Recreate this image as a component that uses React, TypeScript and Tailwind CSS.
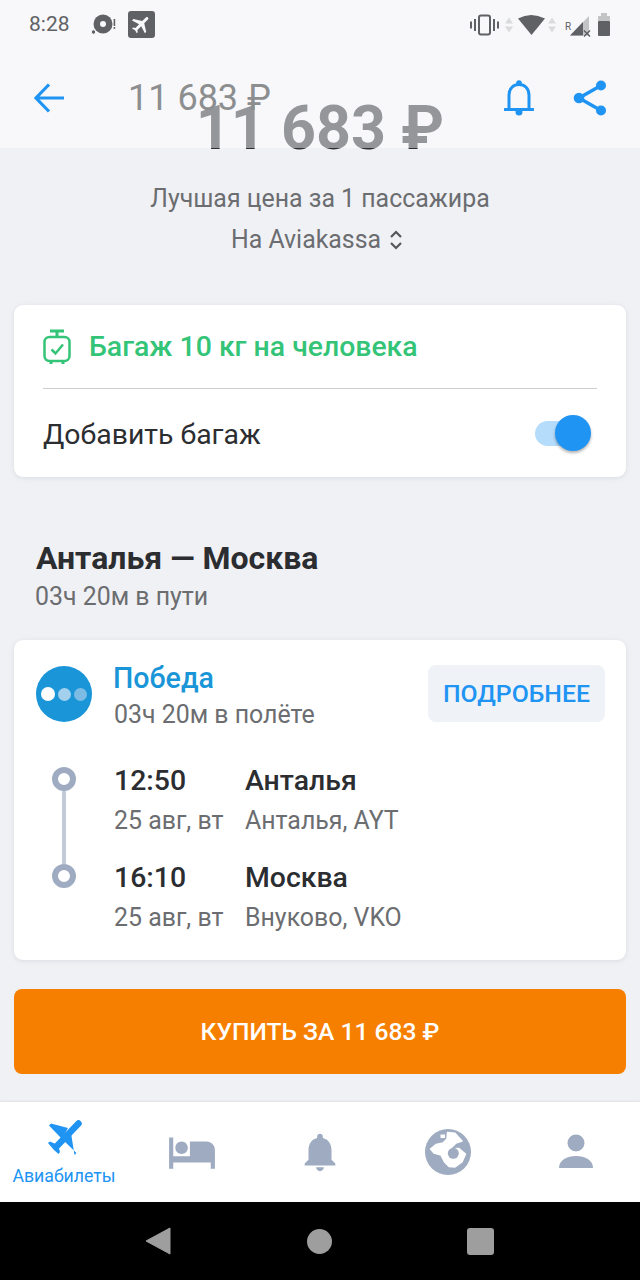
const planePath =
  "M21 16v-2l-8-5V3.5c0-.83-.67-1.5-1.5-1.5S10 2.67 10 3.5V9l-8 5v2l8-2.5V19l-2 1.5V22l3.5-1 3.5 1v-1.5L13 19v-5.5l8 2.5z";

function StatusBar() {
  return (
    <div className="flex h-12 items-center pl-[29px] pr-[29px] pt-[1px] text-[#5f6164]">
      <span className="text-[21px] leading-none">8:28</span>
      {/* disc + alert */}
      <svg width="26" height="22" viewBox="0 0 26 22" className="ml-[20px]">
        <circle cx="13" cy="10" r="9.5" fill="#5f6164" />
        <circle cx="13" cy="10" r="3" fill="#f7f8fa" />
        <circle cx="3.5" cy="18" r="2.2" fill="#5f6164" stroke="#f7f8fa" strokeWidth="1" />
        <rect x="23.6" y="5" width="1.6" height="7" fill="#5f6164" />
        <rect x="23.6" y="13" width="1.6" height="1.8" fill="#5f6164" />
      </svg>
      <div className="ml-[12px] flex h-[27px] w-[27px] items-center justify-center rounded-[3px] bg-[#5f6164]">
        <svg width="23" height="23" viewBox="0 0 24 24" className="rotate-45">
          <path d={planePath} fill="#f7f8fa" />
        </svg>
      </div>
      <div className="ml-auto flex items-center">
        {/* vibrate */}
        <svg width="29" height="22" viewBox="0 0 29 22" fill="#5f6164">
          <rect x="0" y="7.5" width="2" height="7" />
          <rect x="4" y="5" width="2" height="12" />
          <rect x="23" y="5" width="2" height="12" />
          <rect x="27" y="7.5" width="2" height="7" />
          <rect x="9" y="1.5" width="11" height="19" rx="2" fill="none" stroke="#5f6164" strokeWidth="2" />
        </svg>
        {/* wifi with arrows */}
        <svg width="51" height="24" viewBox="0 0 51 24" className="ml-[6px]">
          <path d="M4 3 L8 9 H0 Z M0 12 H8 L4 18 Z" fill="#dadbdd" transform="translate(0 1.5)" />
          <path d="M13 5.5 Q26 -1.500 40 5.500 L26.500 22 Z" fill="#5f6164" />
          <path d="M4 3 L8 9 H0 Z M0 12 H8 L4 18 Z" fill="#dadbdd" transform="translate(43 1.5)" />
        </svg>
        {/* signal */}
        <svg width="28" height="24" viewBox="0 0 28 24" className="ml-[9px]">
          <path d="M5 22.500 L24 3 V22.500 Z" fill="#c3c4c6" />
          <path d="M5 22.500 L18 9 V22.500 Z" fill="#5f6164" />
          <text x="0" y="17" fontSize="10" fill="#5f6164" fontFamily="Roboto, sans-serif">R</text>
          <path d="M19 17.500 L25 23.500 M25 17.500 L19 23.500" stroke="#5f6164" strokeWidth="1.500" />
        </svg>
        {/* battery */}
        <svg width="14" height="23" viewBox="0 0 14 23" className="ml-[4px]">
          <rect x="4" y="0" width="6" height="3" fill="#c3c4c6" />
          <rect x="1" y="3" width="12" height="5" fill="#c3c4c6" />
          <rect x="1" y="8" width="12" height="15" rx="1" fill="#5f6164" />
        </svg>
      </div>
    </div>
  );
}

function Header() {
  return (
    <div className="relative z-10 h-[148px] bg-white/50">
      <StatusBar />
      <div className="flex h-[100px] items-center pl-[34px] pr-[33px]">
        <svg width="30" height="30" viewBox="0 0 30 30" fill="none" stroke="#2094f3" strokeWidth="3.200">
          <path d="M30 15 H2.500 M15 1.500 L2 15 L15 28.500" />
        </svg>
        <span className="ml-[64px] text-[36px] leading-none text-[#8c8e90]">11 683 ₽</span>
        <svg width="30" height="36" viewBox="0 0 30 36" fill="none" className="ml-auto">
          <path d="M1 29.500 H29" stroke="#2094f3" strokeWidth="3" strokeLinecap="round" />
          <path d="M5 29 V15 C5 8.500 9.500 4.500 15 4.500 C20.500 4.500 25 8.500 25 15 V29" stroke="#2094f3" strokeWidth="3" />
          <circle cx="15" cy="3" r="2.800" fill="#2094f3" />
          <circle cx="15" cy="32" r="3.500" fill="#2094f3" />
        </svg>
        <svg width="34" height="36" viewBox="0 0 34 36" className="ml-[39px]">
          <path d="M6 18 L28 5.500 M6 18 L28 30.500" stroke="#2094f3" strokeWidth="3.500" />
          <circle cx="6" cy="18" r="5.300" fill="#2094f3" />
          <circle cx="28" cy="5.500" r="5" fill="#2094f3" />
          <circle cx="28" cy="30.500" r="5" fill="#2094f3" />
        </svg>
      </div>
    </div>
  );
}

function BaggageCard() {
  return (
    <div className="mx-[14px] mt-[47px] h-[172px] rounded-[9px] bg-white px-[29px] shadow-[0_1px_5px_rgba(60,70,90,0.12)]">
      <div className="flex h-[84px] items-center border-b border-[#cfcfd1]">
        <svg width="28" height="36" viewBox="0 0 28 36" fill="none" stroke="#34c477" strokeWidth="2.500" className="mb-[-1px]">
          <path d="M7 2 H21 M14 2 V7" strokeWidth="3" />
          <rect x="1.500" y="8" width="25" height="24" rx="5" />
          <path d="M8 32 V35 M20 32 V35" strokeWidth="3" />
          <path d="M8.500 20.500 L12.500 24.500 L20 15.500" strokeWidth="2.500" />
        </svg>
        <span className="ml-[18px] mt-[2px] text-[28.4px] font-medium leading-none text-[#34c477]">Багаж 10 кг на человека</span>
      </div>
      <div className="flex h-[88px] items-center justify-between">
        <span className="mt-[4px] text-[28.4px] leading-none text-[#2b2d30]">Добавить багаж</span>
        <div className="relative mr-[12px] h-[25px] w-[50px] rounded-full bg-[#b5dcfb]">
          <div className="absolute right-[-6px] top-[-6px] h-9 w-9 rounded-full bg-[#2094f3] shadow-[0_2px_3px_rgba(0,0,0,0.3)]" />
        </div>
      </div>
    </div>
  );
}

function Dot() {
  return <div className="h-6 w-6 rounded-full border-[6px] border-[#9eabc0] bg-white" />;
}

function FlightCard() {
  return (
    <div className="mx-[14px] mt-[25px] h-[320px] rounded-[9px] bg-white pl-[22px] pr-[21px] pt-[25px] shadow-[0_1px_5px_rgba(60,70,90,0.12)]">
      <div className="flex items-start">
        <div className="mt-px flex h-14 w-14 items-center justify-center gap-[3px] rounded-full bg-[#1a96d8]">
          <div className="h-[14px] w-[14px] rounded-full bg-white" />
          <div className="h-[13px] w-[13px] rounded-full bg-[#a3d0ec]" />
          <div className="h-[13px] w-[13px] rounded-full bg-[#7cbce4]" />
        </div>
        <div className="ml-[22px]">
          <div className="ml-[-1px] mt-[-5px] text-[28.6px] font-medium leading-[36px] text-[#1a96d8]">Победа</div>
          <div className="mt-[1px] text-[24.9px] leading-[36px] text-[#6b6d70]">03ч 20м в полёте</div>
        </div>
        <button className="ml-auto h-[57px] w-[177px] rounded-[8px] bg-[#eff2f7] pt-[2px] text-[24.8px] font-medium leading-none text-[#2094f3]">
          ПОДРОБНЕЕ
        </button>
      </div>
      <div className="mt-[29px] flex">
        <div className="flex w-14 flex-col items-center pt-[5px]">
          <Dot />
          <div className="h-[73px] w-[4px] bg-[#c3cbd9]" />
          <Dot />
        </div>
        <div className="ml-[22px] pt-[1px]">
          {[
            { time: "12:50", date: "25 авг, вт", city: "Анталья", airport: "Анталья, AYT" },
            { time: "16:10", date: "25 авг, вт", city: "Москва", airport: "Внуково, VKO" },
          ].map((row) => (
            <div key={row.time} className="h-[97px]">
              <div className="flex text-[28.4px] font-medium leading-[36px] text-[#2b2d30]">
                <span className="w-[131px]">{row.time}</span>
                <span>{row.city}</span>
              </div>
              <div className="mt-[4px] flex text-[24.9px] leading-[36px] text-[#6b6d70]">
                <span className="w-[131px]">{row.date}</span>
                <span>{row.airport}</span>
              </div>
            </div>
          ))}
        </div>
      </div>
    </div>
  );
}

function BottomNav() {
  const grey = "#9eabc0";
  return (
    <div className="grid h-[100px] grid-cols-5 items-center bg-white shadow-[0_-1px_2px_rgba(60,70,90,0.1)]">
      <div className="flex flex-col items-center self-start pt-[10px]">
        {/* plane with thick body, drawn from the reference */}
        <svg width="50" height="50" viewBox="0 0 50 50" fill="#2094f3">
          <path d="M39.500 11.500 L17 35" stroke="#2094f3" strokeWidth="6.500" strokeLinecap="round" />
          <path d="M10 13.500 L12 11.500 L29 16 L23 27 Z" />
          <path d="M37.500 41 L35.500 43 L32 21 L23 27 Z" />
          <path d="M9 31 L11 29.500 L19 33 L21 40 L19.500 42 L15 38 Z" />
        </svg>
        <span className="mt-[4px] text-[17.7px] leading-[20px] text-[#2094f3]">Авиабилеты</span>
      </div>
      <div className="flex justify-center">
        <svg width="50" height="50" viewBox="0 0 24 24">
          <path
            fill={grey}
            d="M7 13c1.660 0 3-1.340 3-3S8.660 7 7 7s-3 1.340-3 3 1.340 3 3 3zm12-6h-8v7H3V5H1v15h2v-3h18v3h2v-9c0-2.210-1.790-4-4-4z"
          />
        </svg>
      </div>
      <div className="flex justify-center">
        <svg width="46" height="46" viewBox="0 0 24 24">
          <path
            fill={grey}
            d="M12 22c1.100 0 2-.9 2-2h-4c0 1.100.89 2 2 2zm6-6v-5c0-3.070-1.640-5.640-4.500-6.320V4c0-.83-.67-1.500-1.500-1.500s-1.500.67-1.500 1.500v.68C7.630 5.360 6 7.920 6 11v5l-2 2v1h16v-1l-2-2z"
          />
        </svg>
      </div>
      <div className="flex justify-center">
        <svg width="46" height="46" viewBox="0 0 46 46">
          <circle cx="23" cy="23" r="23" fill={grey} />
          <path
            fill="#fff"
            stroke="#fff"
            strokeWidth="1.500"
            strokeLinejoin="round"
            d="M5.500 20 L11 15.500 L18 14 L22 10 L22.500 3.500 L30 4.300 L37 12 L31 14 L25 20 L34 19.500 L40.500 25 L37 33 L30 38 L24 37.500 L19.500 33 L16 26 L9 24 Z"
          />
          <circle cx="28.300" cy="24.300" r="5.500" fill={grey} />
          <rect x="15.500" y="5.500" width="4.500" height="3.500" fill="#fff" />
        </svg>
      </div>
      <div className="flex justify-center">
        <svg width="36" height="36" viewBox="0 0 36 36">
          <circle cx="18" cy="9" r="8.500" fill={grey} />
          <path d="M1 34 C1 26 9 22 18 22 C27 22 35 26 35 34 Z" fill={grey} />
        </svg>
      </div>
    </div>
  );
}

function SystemBar() {
  return (
    <div className="flex h-[78px] items-center bg-black">
      <svg width="26" height="28" viewBox="0 0 26 28" className="ml-[145px]">
        <path d="M25 1 V27 L1 14 Z" fill="#9e9e9e" stroke="#9e9e9e" strokeLinejoin="round" />
      </svg>
      <div className="ml-[136px] h-[25px] w-[25px] rounded-full bg-[#9e9e9e]" />
      <div className="ml-[135px] h-[27px] w-[27px] rounded-[3px] bg-[#9e9e9e]" />
    </div>
  );
}

export default function App() {
  return (
    <div className="flex h-[1280px] w-[640px] flex-col overflow-hidden bg-[#f0f1f5] font-['Roboto',sans-serif]">
      <Header />
      <div className="mt-[-148px] flex-1 pt-[98px]">
        <div className="text-center text-[61px] font-bold leading-[60px] text-[#2a2d33]">11 683 ₽</div>
        <div className="mt-[23px] text-center text-[24.9px] leading-[36px] text-[#6b6d70]">Лучшая цена за 1 пассажира</div>
        <div className="mt-[5px] flex items-center justify-center pr-[6px] text-[24.9px] leading-[36px] text-[#6b6d70]">
          На Aviakassa
          <svg width="14" height="22" viewBox="0 0 14 22" fill="none" stroke="#55575a" strokeWidth="2.200" className="ml-[8px]">
            <path d="M2 8 L7 3 L12 8 M2 14 L7 19 L12 14" />
          </svg>
        </div>
        <BaggageCard />
        <div className="ml-[36px] mt-[63px] text-[32px] font-bold leading-[37px] text-[#2b2d30]">Анталья — Москва</div>
        <div className="ml-[35px] mt-[1px] text-[24.9px] leading-[38px] text-[#6b6d70]">03ч 20м в пути</div>
        <div className="mt-[-1px]">
          <FlightCard />
        </div>
        <button className="mx-[14px] mt-[29px] block h-[85px] w-[612px] rounded-[8px] bg-[#f77f00] pt-[2px] text-[24.6px] font-medium leading-none text-white">
          КУПИТЬ ЗА 11 683 ₽
        </button>
      </div>
      <BottomNav />
      <SystemBar />
    </div>
  );
}
